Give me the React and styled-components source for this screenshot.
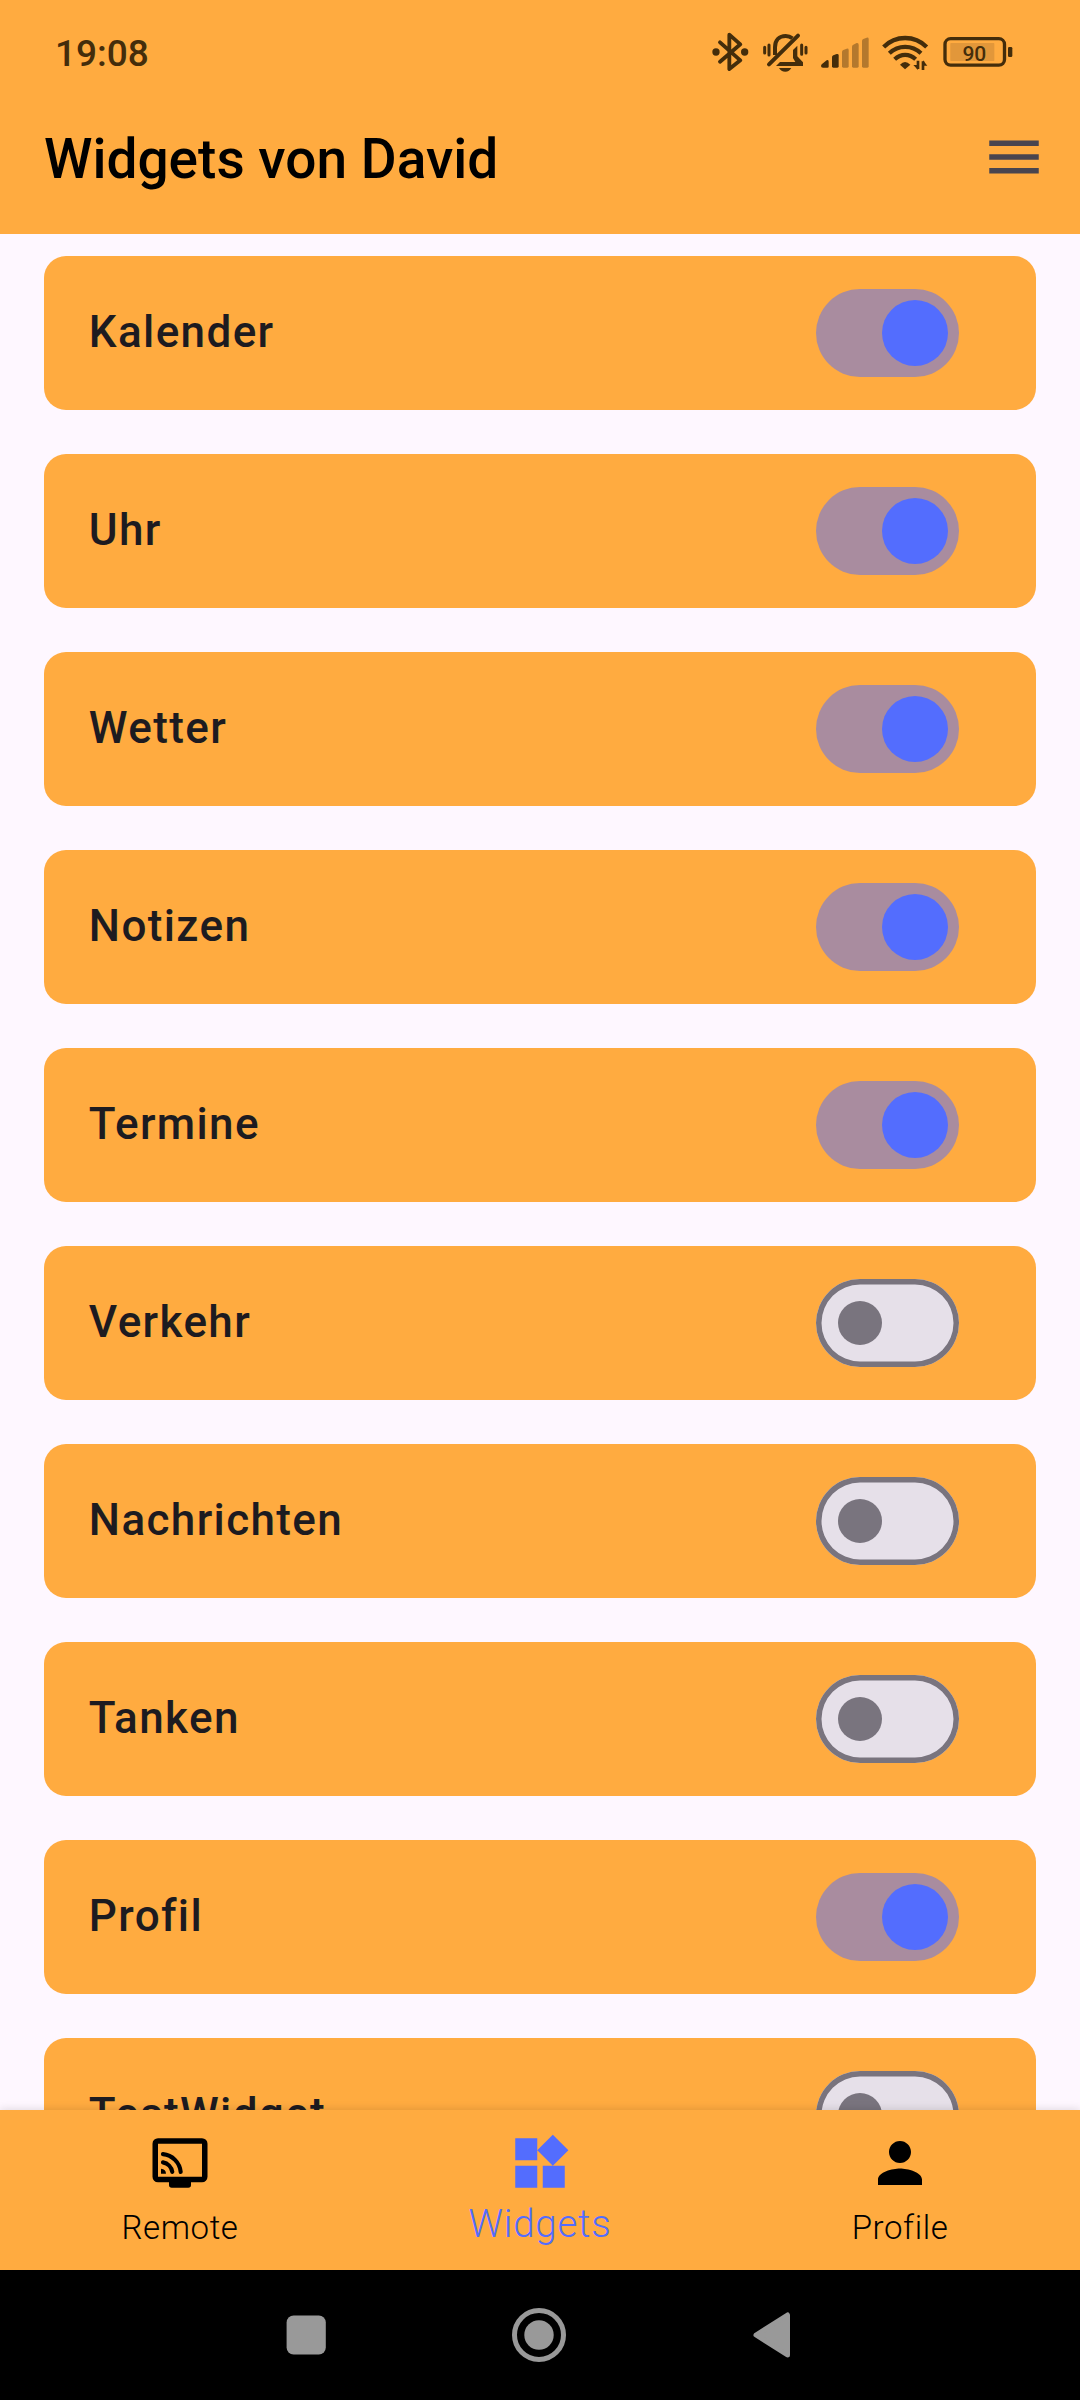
import React, { useState } from "react";
import styled, { createGlobalStyle } from "styled-components";

const color = {
  orange: "#ffab40",
  indigo: "#536dfe",
  surface: "#fef7ff",
  status: "#442d0b",
};

const GlobalStyle = createGlobalStyle`
  *, *::before, *::after { box-sizing: border-box; }
  body { margin: 0; background: ${color.surface}; }
`;

const Screen = styled.div`
  display: flex;
  flex-direction: column;
  width: 1080px;
  height: 2400px;
  overflow: hidden;
  background: ${color.surface};
  font-family: Roboto, "Liberation Sans", sans-serif;
`;

const StatusBar = styled.header`
  flex: none;
  display: flex;
  justify-content: space-between;
  height: 82px;
  padding: 20px 67px 0 55px;
  background: ${color.orange};
  color: ${color.status};
`;

const Clock = styled.time`
  font-size: 37px;
  line-height: 68px;
  font-weight: 500;
`;

const StatusIcons = styled.div`
  display: flex;
  align-items: flex-start;
  svg { display: block; flex: none; }
`;

const AppBar = styled.div`
  flex: none;
  display: flex;
  align-items: center;
  justify-content: space-between;
  height: 152px;
  padding: 0 33px 2px 44px;
  background: ${color.orange};
`;

const Title = styled.h1`
  margin: 0;
  padding-top: 4px;
  font-size: 55px;
  line-height: 70px;
  font-weight: 500;
  color: #000;
`;

const IconButton = styled.button`
  display: flex;
  padding: 0;
  border: 0;
  background: none;
`;

const List = styled.main`
  flex: 1;
  min-height: 0;
  overflow: hidden;
  display: flex;
  flex-direction: column;
  gap: 44px;
  padding: 22px 44px 0;
`;

const Card = styled.section`
  flex: none;
  display: flex;
  align-items: center;
  justify-content: space-between;
  height: 154px;
  padding: 0 77px 0 44.8px;
  border-radius: 22px;
  background: ${color.orange};
`;

const CardLabel = styled.span`
  font-size: 44px;
  line-height: 64px;
  font-weight: 500;
  letter-spacing: 1.375px;
  color: #1d1b20;
  padding-bottom: 2px;
`;

const Track = styled.button`
  display: flex;
  align-items: center;
  justify-content: ${(p) => (p.$on ? "flex-end" : "flex-start")};
  width: 143px;
  height: 88px;
  padding: 0 11px 0 ${(p) => (p.$on ? 11 : 22)}px;
  border: 0;
  border-radius: 44px;
  background: ${(p) => (p.$on ? "rgba(83, 109, 254, 0.5)" : "#e6e0e9")};
  box-shadow: ${(p) => (p.$on ? "none" : "inset 0 0 0 5.5px #79747e")};
`;

const Thumb = styled.span`
  width: ${(p) => (p.$on ? 66 : 44)}px;
  height: ${(p) => (p.$on ? 66 : 44)}px;
  border-radius: 50%;
  background: ${(p) => (p.$on ? color.indigo : "#79747e")};
`;

const BottomNav = styled.nav`
  position: relative;
  flex: none;
  display: grid;
  grid-template-columns: repeat(3, 1fr);
  height: 160px;
  background: ${color.orange};
  box-shadow: 0 -1px 8px rgba(0, 0, 0, 0.12);
`;

const NavItem = styled.button`
  display: flex;
  flex-direction: column;
  align-items: center;
  padding: 20px 0 0;
  border: 0;
  background: none;
  font-family: inherit;
  color: ${(p) => (p.$active ? color.indigo : "#000")};
  svg { display: block; fill: currentColor; }
`;

const NavLabel = styled.span`
  margin-top: ${(p) => (p.$active ? 3 : 9)}px;
  font-size: ${(p) => (p.$active ? 38.5 : 33)}px;
  line-height: ${(p) => (p.$active ? 50 : 46)}px;
  font-weight: 300;
  letter-spacing: ${(p) => (p.$active ? 0.75 : 0.6)}px;
`;

const SystemNav = styled.footer`
  flex: none;
  display: flex;
  align-items: center;
  height: 130px;
  padding-left: 286px;
  background: #000;
  svg { display: block; fill: #999; }
`;

const SystemButton = styled.button`
  display: flex;
  padding: 0;
  border: 0;
  background: none;
  margin-left: ${(p) => p.$gap || 0}px;
`;

const ink = { fill: color.status, stroke: "none" };
const line = { fill: "none", stroke: color.status };

const BluetoothIcon = () => (
  <svg width="37" height="50" viewBox="65 0 111 150" overflow="visible">
    <path d="M89 67L150 121L117 147V44L150 73L89 125" {...line} strokeWidth="11.5" strokeLinecap="round" strokeLinejoin="round" />
    <circle cx="77" cy="96" r="11" {...ink} />
    <circle cx="163" cy="96" r="11" {...ink} />
  </svg>
);

const SilentBellIcon = () => (
  <svg width="45" height="55" viewBox="218 0 135 165">
    <path d="M254 105V82C254 60 267 48 286 48C294 48 300 50 306 55" {...line} strokeWidth="12" />
    <path d="M236 133L323 47" {...line} strokeWidth="12" strokeLinecap="round" />
    <path d="M308 90L321 77V109L338 127V138H257L269 126H315L308 114Z" {...ink} />
    <path d="M266 144H303Q297 155 285 155Q272 155 266 144Z" {...ink} />
    <path d="M223 82V99M236 75V105M334 75V103M347 82V99" {...line} strokeWidth="9" strokeLinecap="round" />
  </svg>
);

const SignalIcon = () => (
  <svg width="49" height="50" viewBox="394 0 147 150">
    <path d="M394 138Q394 134 398 131L411 121Q417 118 417 125V140Q417 143 413 143H400Q394 143 394 138Z" {...ink} />
    <path d="M427 112Q427 108 431 106L441 102Q447 101 447 106V139Q447 143 443 143H431Q427 143 427 139Z" {...ink} />
    <g fill="#b4782d">
      <path d="M457 96Q457 92 461 90L471 86Q477 85 477 90V139Q477 143 473 143H461Q457 143 457 139Z" />
      <path d="M487 80Q487 76 491 74L501 69Q507 68 507 74V139Q507 143 503 143H491Q487 143 487 139Z" />
      <path d="M517 63Q517 59 521 57L531 53Q537 52 537 57V139Q537 143 533 143H521Q517 143 517 139Z" />
    </g>
  </svg>
);

const WifiIcon = () => (
  <svg width="47" height="55" viewBox="575 0 141 165">
    <path d="M580 81C616 45 673 45 709 81" {...line} strokeWidth="13" />
    <path d="M597 100C624 74 665 74 692 100" {...line} strokeWidth="12.5" />
    <path d="M613 118C632 100 657 100 676 118" {...line} strokeWidth="12.5" />
    <path d="M629 134Q644 118 660 134L644 148Z" {...ink} />
    <path d="M683 122V147M698 150V124" {...line} strokeWidth="8" />
    <path d="M669 135H683V150ZM711 137H698V121Z" {...ink} />
  </svg>
);

const BatteryIcon = () => (
  <svg width="70" height="50" viewBox="758 0 210 150">
    <rect x="764" y="56" width="178.500" height="79.500" rx="17" {...line} strokeWidth="10" />
    <rect x="780" y="69" width="132" height="54" rx="2" fill="#e2973a" />
    <rect x="953" y="81" width="13" height="30" rx="4" {...ink} />
    <text x="852" y="121.500" textAnchor="middle" fontFamily="Roboto, sans-serif" fontSize="63" fontWeight="500" {...ink}>
      90
    </text>
  </svg>
);

const Spacer = styled.span`
  width: ${(p) => p.$w}px;
`;

const MenuIcon = () => (
  <svg width="66" height="66" viewBox="0 0 24 24" fill="#49454f">
    <path d="M3 18h18v-2H3v2zm0-5h18v-2H3v2zm0-7v2h18V6H3z" />
  </svg>
);

const RemoteIcon = () => (
  <svg width="66" height="66" viewBox="0 0 24 24">
    <path
      fillRule="evenodd"
      d="M4 3H20A2 2 0 0 1 22 5V17A2 2 0 0 1 20 19H16V20A1 1 0 0 1 15 21H9A1 1 0 0 1 8 20V19H4A2 2 0 0 1 2 17V5A2 2 0 0 1 4 3ZM4 5V17H20V5Z"
    />
    <path d="M5.1 14.1Q6.9 14.3 6.9 15.9H5.1Z" />
    <path d="M5.8 11.78A4.2 4.2 0 0 1 9.2 15.25M5.8 8.76A7.2 7.2 0 0 1 12.25 15.25" fill="none" stroke="currentColor" strokeWidth="1.5" strokeLinecap="round" />
  </svg>
);

const WidgetsIcon = () => (
  <svg width="66" height="66" viewBox="0 0 24 24">
    <path d="M13 13v8h8v-8h-8zM3 21h8v-8H3v8zM3 3v8h8V3H3zm13.66-1.31L11 7.34 16.66 13l5.66-5.66-5.66-5.65z" />
  </svg>
);

const ProfileIcon = () => (
  <svg width="66" height="66" viewBox="0 0 24 24">
    <path d="M12 12c2.21 0 4-1.79 4-4s-1.79-4-4-4-4 1.79-4 4 1.79 4 4 4zm0 2c-2.67 0-8 1.34-8 4v2h16v-2c0-2.66-5.33-4-8-4z" />
  </svg>
);

const initialWidgets = [
  { name: "Kalender", on: true },
  { name: "Uhr", on: true },
  { name: "Wetter", on: true },
  { name: "Notizen", on: true },
  { name: "Termine", on: true },
  { name: "Verkehr", on: false },
  { name: "Nachrichten", on: false },
  { name: "Tanken", on: false },
  { name: "Profil", on: true },
  { name: "TestWidget", on: false },
];

const tabs = [
  { label: "Remote", Icon: RemoteIcon },
  { label: "Widgets", Icon: WidgetsIcon },
  { label: "Profile", Icon: ProfileIcon },
];

export default function App() {
  const [widgets, setWidgets] = useState(initialWidgets);
  const [active, setActive] = useState("Widgets");
  const toggle = (name) =>
    setWidgets((all) => all.map((w) => (w.name === name ? { ...w, on: !w.on } : w)));

  return (
    <Screen>
      <GlobalStyle />
      <StatusBar>
        <Clock>19:08</Clock>
        <StatusIcons>
          <BluetoothIcon />
          <Spacer $w={14} />
          <SilentBellIcon />
          <Spacer $w={13.67} />
          <SignalIcon />
          <Spacer $w={11.33} />
          <WifiIcon />
          <Spacer $w={14} />
          <BatteryIcon />
          <Spacer $w={0.33} />
        </StatusIcons>
      </StatusBar>
      <AppBar>
        <Title>Widgets von David</Title>
        <IconButton>
          <MenuIcon />
        </IconButton>
      </AppBar>
      <List>
        {widgets.map((w) => (
          <Card key={w.name}>
            <CardLabel>{w.name}</CardLabel>
            <Track $on={w.on} role="switch" aria-checked={w.on} onClick={() => toggle(w.name)}>
              <Thumb $on={w.on} />
            </Track>
          </Card>
        ))}
      </List>
      <BottomNav>
        {tabs.map(({ label, Icon }) => (
          <NavItem key={label} $active={label === active} onClick={() => setActive(label)}>
            <Icon />
            <NavLabel $active={label === active}>{label}</NavLabel>
          </NavItem>
        ))}
      </BottomNav>
      <SystemNav>
        <SystemButton>
          <svg width="40" height="40" viewBox="0 0 40 40">
            <rect x="0.6" y="0.4" width="39.2" height="39.2" rx="7" />
          </svg>
        </SystemButton>
        <SystemButton $gap={186}>
          <svg width="54" height="54" viewBox="0 0 54 54">
            <circle cx="27" cy="27" r="24.5" fill="none" stroke="#999" strokeWidth="5" />
            <circle cx="27" cy="27" r="14.7" />
          </svg>
        </SystemButton>
        <SystemButton $gap={187}>
          <svg width="38" height="46" viewBox="0 0 38 46">
            <path d="M3 23L34.5 3V43Z" stroke="#999" strokeWidth="5" strokeLinejoin="round" />
          </svg>
        </SystemButton>
      </SystemNav>
    </Screen>
  );
}
